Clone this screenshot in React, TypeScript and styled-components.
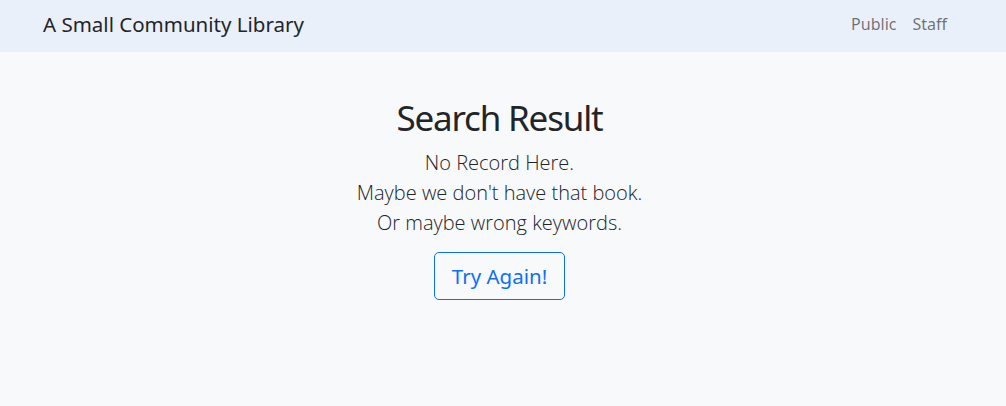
import React from "react";
import styled, { createGlobalStyle } from "styled-components";

const Global = createGlobalStyle`
  html, body { margin: 0; padding: 0; }
  body {
    background: #f8f9fa;
    font-family: "Noto Sans", "Open Sans", sans-serif;
    color: #212529;
    font-size: 16px;
    line-height: 1.5;
  }
`;

const Nav = styled.nav`
  height: 52px;
  background: #e9f0fa;
  display: flex;
  align-items: center;
  justify-content: space-between;
  padding: 0 51px 4px 43px;
  box-sizing: border-box;
`;

const Brand = styled.a`
  font-size: 20.5px;
  color: #212529;
  text-decoration: none;
`;

const Links = styled.div`
  display: flex;
`;

const NavLink = styled.a`
  font-size: 16px;
  color: rgba(0, 0, 0, 0.55);
  text-decoration: none;
  padding: 0 8px;
`;

const Main = styled.main`
  display: flex;
  flex-direction: column;
  align-items: center;
  padding: 44px 7px 0 0;
  text-align: center;
`;

const Title = styled.h1`
  font-size: 35px;
  font-weight: 400;
  letter-spacing: -1.2px;
  line-height: 44px;
  margin: 0 0 8px;
`;

const Lead = styled.p`
  font-family: "Open Sans", "Noto Sans", sans-serif;
  font-size: 20px;
  font-weight: 300;
  line-height: 30px;
  margin: 0 0 14px;
`;

const Button = styled.button`
  font-family: inherit;
  font-size: 20.5px;
  line-height: 30px;
  padding: 8px 17px;
  color: #0d6efd;
  background: transparent;
  border: 1px solid #0d6efd;
  border-radius: 5px;
  cursor: pointer;
`;

export default function App() {
  return (
    <>
      <Global />
      <Nav>
        <Brand href="#">A Small Community Library</Brand>
        <Links>
          <NavLink href="#">Public</NavLink>
          <NavLink href="#">Staff</NavLink>
        </Links>
      </Nav>
      <Main>
        <Title>Search Result</Title>
        <Lead>
          No Record Here.
          <br />
          Maybe we don't have that book.
          <br />
          Or maybe wrong keywords.
        </Lead>
        <Button>Try Again!</Button>
      </Main>
    </>
  );
}
